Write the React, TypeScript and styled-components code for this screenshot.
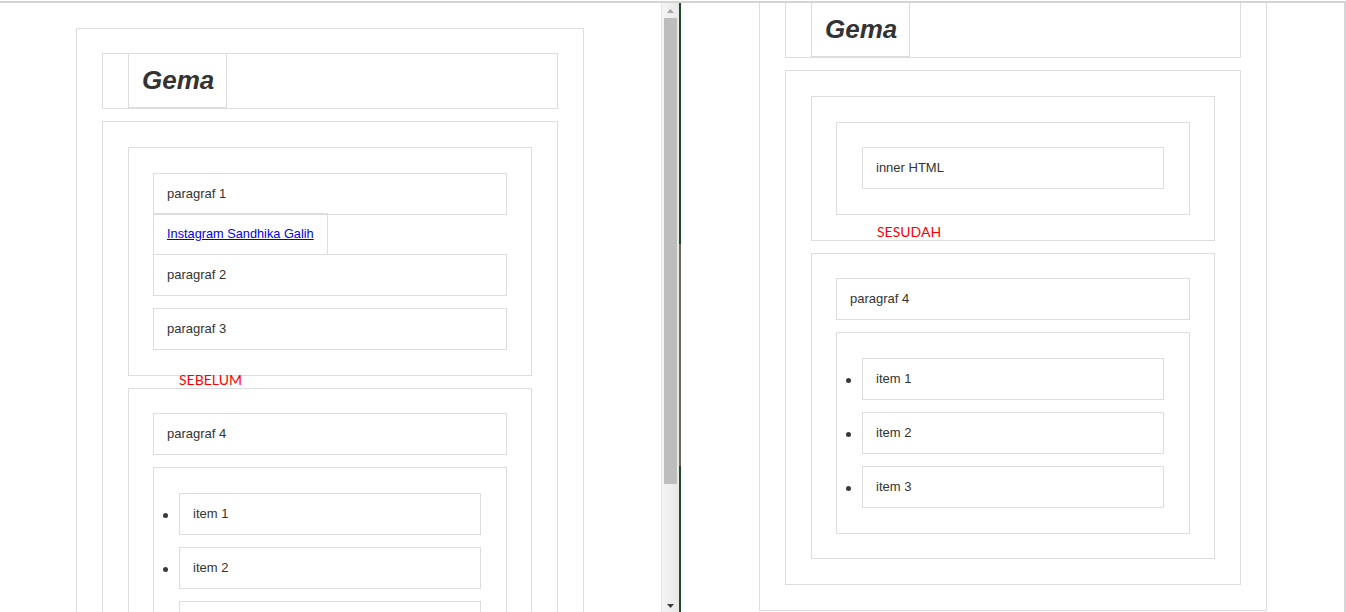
import React from "react";
import styled, { createGlobalStyle } from "styled-components";

const GlobalStyle = createGlobalStyle`
  html, body { margin: 0; padding: 0; background: #fff; }
  body {
    width: 1346px;
    height: 612px;
    overflow: hidden;
    font-family: "Liberation Sans", Arial, sans-serif;
  }
  *, *::before, *::after { box-sizing: border-box; }
`;

const BORDER = "#dddddd";

const Screen = styled.div`
  width: 1346px;
  height: 612px;
  display: flex;
  flex-direction: column;
  background: #fff;
  overflow: hidden;
`;

const TopRule = styled.div`
  flex: none;
  margin-top: 1px;
  height: 2px;
  background: #d4d4d4;
`;

const Workspace = styled.div`
  flex: 1;
  min-height: 0;
  display: flex;
`;

const LeftPane = styled.div`
  flex: none;
  width: 661px;
  overflow: hidden;
  padding: 25px 0 0 76px;
`;

const RightPane = styled.div`
  flex: none;
  width: 665px;
  overflow: hidden;
  border-right: 2px solid #d6d6d6;
  display: flex;
  flex-direction: column;
  justify-content: flex-end;
  padding: 0 77px 1px 78px;
`;

const Page = styled.div`
  flex: none;
  width: 508px;
  border: 1px solid ${BORDER};
  padding: 24px 25px 25px;
`;

const Header = styled.header`
  display: flex;
  border: 1px solid ${BORDER};
  padding: 0 25px;
`;

const Title = styled.h1`
  margin: 0;
  height: 54px;
  border: 1px solid ${BORDER};
  border-top: none;
  padding: 0 12px 0 13px;
  font-family: "Liberation Sans", Arial, sans-serif;
  font-size: 26px;
  font-weight: bold;
  font-style: italic;
  line-height: 53px;
  color: #333;
`;

const Main = styled.main`
  margin-top: 12px;
  border: 1px solid ${BORDER};
  padding: 25px;
`;

const Section = styled.section<{ $pad: string; $mt?: number }>`
  border: 1px solid ${BORDER};
  padding: ${(p) => p.$pad};
  margin-top: ${(p) => p.$mt ?? 0}px;
`;

const Para = styled.p<{ $mt?: number }>`
  margin: ${(p) => p.$mt ?? 0}px 0 0;
  height: 42px;
  border: 1px solid ${BORDER};
  padding: 0 13px;
  font-size: 13px;
  line-height: 40px;
  color: #333;
  white-space: nowrap;
`;

const LinkBox = styled.a`
  display: block;
  width: fit-content;
  margin-top: -2px;
  height: 42px;
  border: 1px solid ${BORDER};
  padding: 0 13px;
  font-size: 12.75px;
  line-height: 40px;
  color: #0000ee;
  text-decoration: underline;
  white-space: nowrap;
`;

const Caption = styled.div<{ $h: number; $lh: number; $indent: number }>`
  height: ${(p) => p.$h}px;
  line-height: ${(p) => p.$lh}px;
  padding-left: ${(p) => p.$indent}px;
  font-family: Lato, "Open Sans", sans-serif;
  font-size: 14px;
  color: #ff0000;
  white-space: nowrap;
  position: relative;
`;

const List = styled.ul`
  margin: 12px 0 0;
  padding: 25px 25px 25px 0;
  border: 1px solid ${BORDER};
  list-style: none;
`;

const ListItem = styled.li`
  display: flex;
  align-items: center;
  & + & {
    margin-top: 12px;
  }
`;

const Bullet = styled.span`
  flex: none;
  width: 5px;
  height: 5px;
  margin: 2px 11px 0 9px;
  border-radius: 50%;
  background: #3a3a3a;
`;

const ItemBox = styled.div`
  width: 302px;
  height: 42px;
  border: 1px solid ${BORDER};
  padding: 0 13px;
  font-size: 13px;
  line-height: 40px;
  color: #333;
`;

const ScrollTrack = styled.div`
  flex: none;
  width: 18px;
  border-left: 1px solid #e4e4e4;
  background: linear-gradient(to right, #f4f4f4, #e8e8e8);
  display: flex;
  flex-direction: column;
`;

const ArrowCell = styled.div<{ $h: number }>`
  flex: none;
  height: ${(p) => p.$h}px;
  display: flex;
  align-items: center;
  justify-content: center;
`;

const Thumb = styled.div`
  flex: none;
  width: 13px;
  height: 466px;
  margin-left: 2px;
  background: #bdbdbd;
`;

const TrackRest = styled.div`
  flex: 1;
`;

const Splitter = styled.div`
  flex: none;
  width: 2px;
  display: flex;
  flex-direction: column;
`;

const SplitSeg = styled.div<{ $h?: number; $color: string }>`
  flex: ${(p) => (p.$h ? "none" : "1")};
  height: ${(p) => (p.$h ? `${p.$h}px` : "auto")};
  background: ${(p) => p.$color};
`;

const items = ["item 1", "item 2", "item 3"];

function ItemList() {
  return (
    <List>
      {items.map((t) => (
        <ListItem key={t}>
          <Bullet />
          <ItemBox>{t}</ItemBox>
        </ListItem>
      ))}
    </List>
  );
}

function Scrollbar() {
  return (
    <ScrollTrack>
      <ArrowCell $h={15}>
        <svg width="7" height="4" viewBox="0 0 7 4">
          <polygon points="0,4 3.5,0 7,4" fill="#a4a4a4" />
        </svg>
      </ArrowCell>
      <Thumb />
      <TrackRest />
      <ArrowCell $h={12}>
        <svg width="7" height="4" viewBox="0 0 7 4">
          <polygon points="0,0 7,0 3.5,4" fill="#3c3c3c" />
        </svg>
      </ArrowCell>
    </ScrollTrack>
  );
}

export default function App() {
  return (
    <>
      <GlobalStyle />
      <Screen>
        <TopRule />
        <Workspace>
          <LeftPane>
            <Page>
              <Header>
                <Title>Gema</Title>
              </Header>
              <Main>
                <Section $pad="25px 24px">
                  <Para>paragraf 1</Para>
                  <LinkBox href="#">Instagram Sandhika Galih</LinkBox>
                  <Para $mt={-1}>paragraf 2</Para>
                  <Para $mt={12}>paragraf 3</Para>
                </Section>
                <Caption $h={12} $lh={7} $indent={51}>
                  SEBELUM
                </Caption>
                <Section $pad="24px 24px 25px">
                  <Para>paragraf 4</Para>
                  <ItemList />
                </Section>
              </Main>
            </Page>
          </LeftPane>
          <Scrollbar />
          <Splitter>
            <SplitSeg $h={241} $color="#1f4a22" />
            <SplitSeg $h={222} $color="#6d685b" />
            <SplitSeg $color="#1f4a22" />
          </Splitter>
          <RightPane>
            <Page>
              <Header>
                <Title>Gema</Title>
              </Header>
              <Main>
                <Section $pad="25px 24px 0">
                  <Section $pad="24px 25px 25px">
                    <Para>inner HTML</Para>
                  </Section>
                  <Caption $h={25} $lh={33} $indent={41}>
                    SESUDAH
                  </Caption>
                </Section>
                <Section $pad="24px" $mt={12}>
                  <Para>paragraf 4</Para>
                  <ItemList />
                </Section>
              </Main>
            </Page>
          </RightPane>
        </Workspace>
      </Screen>
    </>
  );
}
